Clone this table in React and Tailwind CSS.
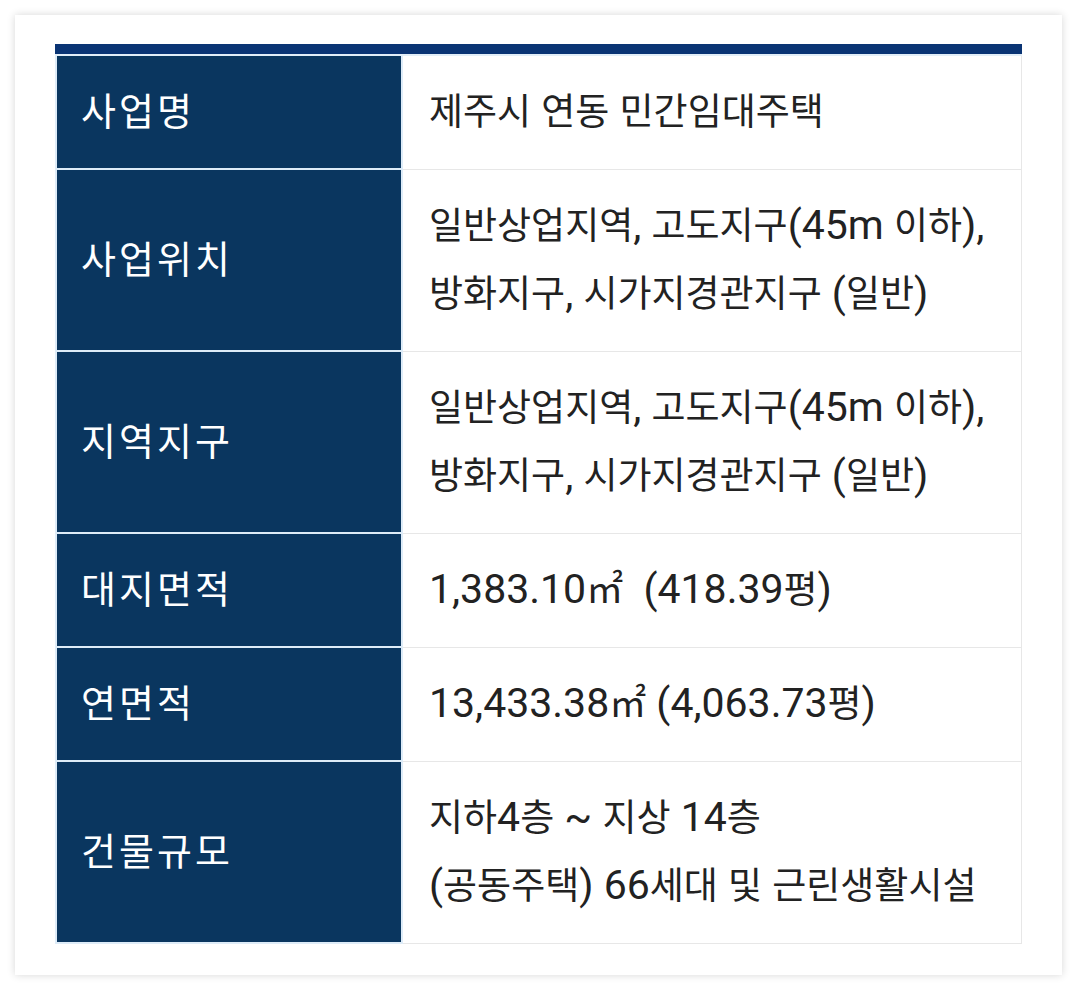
const rows = [
  { label: '사업명', lines: ['제주시 연동 민간임대주택'] },
  { label: '사업위치', lines: ['일반상업지역, 고도지구(45m 이하),', '방화지구, 시가지경관지구 (일반)'] },
  { label: '지역지구', lines: ['일반상업지역, 고도지구(45m 이하),', '방화지구, 시가지경관지구 (일반)'] },
  { label: '대지면적', lines: ['1,383.10㎡\u00a0 (418.39평)'] },
  { label: '연면적', lines: ['13,433.38㎡ (4,063.73평)'] },
  { label: '건물규모', lines: ['지하4층 ~ 지상 14층', '(공동주택) 66세대 및 근린생활시설'] },
];

// latin runs render a little larger than hangul, like the android font fallback
const Line = ({ text }) => {
  const parts = text.split(/([\uAC00-\uD7A3\u33A1]+)/).filter(Boolean);
  return (
    <div>
      {parts.map((p, i) =>
        /[\uAC00-\uD7A3\u33A1]/.test(p) ? (
          <span key={i}>{p}</span>
        ) : (
          <span key={i} className="text-[41px] leading-none">{p}</span>
        )
      )}
    </div>
  );
};

const App = () => {
  return (
    <div
      className="min-h-screen bg-white p-[15px] pr-[16px]"
      style={{ fontFamily: 'Roboto, "Noto Sans CJK KR", sans-serif' }}
    >
      <div className="bg-white shadow-[0_0_8px_rgba(0,0,0,0.16)] px-[40px] pt-[29px] pb-[31px]">
        <div className="h-[10px] bg-[#0a3474]" />
        <div className="h-[2px] bg-[#e2eef8]" />
        {rows.map((row) => (
          <div key={row.label} className="flex">
            <div className="w-[348px] shrink-0 flex items-center bg-[#0a365f] border-l-2 border-r-2 border-b-2 border-[#deecf8] pl-[24px] text-white text-[38px] tracking-[3px]">
              {row.label}
            </div>
            <div className="flex-1 border-r border-b border-[#e7e7e7] pt-[23px] pb-[22px] pl-[26px] text-[37px] leading-[68px] text-[#222222]">
              {row.lines.map((line) => (
                <Line key={line} text={line} />
              ))}
            </div>
          </div>
        ))}
      </div>
    </div>
  );
};

export default App;
